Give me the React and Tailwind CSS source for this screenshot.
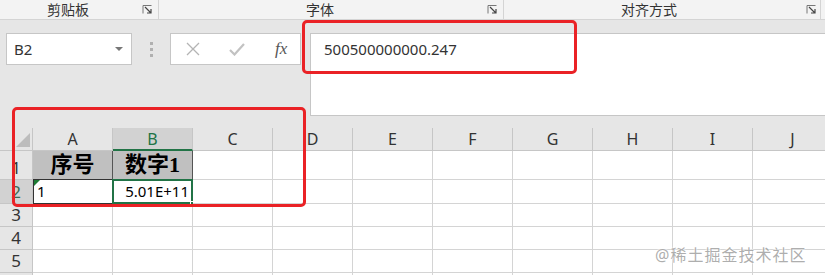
import React from 'react';

const cols = ['A', 'B', 'C', 'D', 'E', 'F', 'G', 'H', 'I', 'J'];

const Launcher = () => (
  <svg width="11" height="11" viewBox="0 0 11 11" className="shrink-0">
    <path d="M1 9.5V1.5H9.5" fill="none" stroke="#777" strokeWidth="1" />
    <path d="M3 3L9 9M9 5V9H5" fill="none" stroke="#444" strokeWidth="1.2" />
  </svg>
);

const RibbonGroup = ({ label, width, labelPad, launcherPad }) => (
  <div className={`flex h-full items-center border-r border-[#d4d4d4] ${width}`}>
    <span className={`text-[14px] leading-none text-[#333] ${labelPad}`}>{label}</span>
    <span className={`ml-auto ${launcherPad}`}>
      <Launcher />
    </span>
  </div>
);

const Cell = ({ children, className = 'bg-white' }) => (
  <div className={`relative h-full w-[80px] shrink-0 border-r border-b border-[#d4d4d4] ${className}`}>
    {children}
  </div>
);

const RowHead = ({ n, active, h }) => (
  <div
    className={`flex w-[33px] shrink-0 items-end justify-center border-r border-b border-[#c6c6c6] text-[17px] leading-none ${
      active ? 'bg-[#d2d2d2] text-[#3c6a52]' : 'bg-[#e6e6e6] text-[#333]'
    } ${h}`}
  >
    <span className="mb-[3px]">{n}</span>
  </div>
);

export default function App() {
  return (
    <div className="relative h-[275px] w-[825px] overflow-hidden bg-[#e6e6e6] font-['Noto_Sans','Noto_Sans_CJK_SC',sans-serif]">
      {/* ribbon group labels */}
      <div className="flex h-[20px] border-b border-[#d4d4d4] bg-[#f3f3f3]">
        <RibbonGroup label="剪贴板" width="w-[159px]" labelPad="pl-[47px]" launcherPad="pr-[5px]" />
        <RibbonGroup label="字体" width="w-[345px]" labelPad="pl-[147px]" launcherPad="pr-[5px]" />
        <RibbonGroup label="对齐方式" width="w-[317px]" labelPad="pl-[117px]" launcherPad="pr-[3px]" />
      </div>

      {/* formula bar */}
      <div className="flex h-[108px] items-start pt-[13px]">
        <div className="ml-[6px] flex h-[32px] w-[126px] items-center border border-[#c6c6c6] bg-white pl-[7px] pr-[8px]">
          <span className="text-[15px] text-[#333]">B2</span>
          <svg width="8" height="4" viewBox="0 0 8 4" className="ml-auto">
            <path d="M0 0H8L4 4Z" fill="#777" />
          </svg>
        </div>
        <div className="flex h-[32px] w-[38px] flex-col items-center justify-center gap-[3px]">
          <span className="h-[3px] w-[3px] bg-[#b0b0b0]" />
          <span className="h-[3px] w-[3px] bg-[#b0b0b0]" />
          <span className="h-[3px] w-[3px] bg-[#b0b0b0]" />
        </div>
        <div className="flex h-[32px] w-[131px] items-center border border-[#c6c6c6] bg-white">
          <svg width="14" height="14" viewBox="0 0 14 14" className="ml-[15px]">
            <path d="M1 1L13 13M13 1L1 13" stroke="#b4b4b4" strokeWidth="1.3" />
          </svg>
          <svg width="16" height="13" viewBox="0 0 16 13" className="ml-[29px]">
            <path d="M1 7L5.5 11.5L15 1" fill="none" stroke="#c2c2c2" strokeWidth="2.2" />
          </svg>
          <span className="ml-[30px] font-['Liberation_Serif',serif] text-[17px] italic text-[#555]">fx</span>
        </div>
        <div className="ml-[9px] flex h-[83px] flex-1 items-start border-y border-l border-[#c6c6c6] bg-white pl-[13px] pt-[4px]">
          <span className="text-[15px] text-[#333]">500500000000.247</span>
        </div>
      </div>

      {/* sheet grid */}
      <div className="flex flex-col">
        <div className="flex h-[23px]">
          <div className="relative w-[33px] shrink-0 border-r border-b border-[#c6c6c6]">
            <svg width="14" height="14" viewBox="0 0 14 14" className="absolute right-[2px] bottom-[3px]">
              <path d="M14 0V14H0Z" fill="#bdbdbd" />
            </svg>
          </div>
          {cols.map((c) => (
            <div
              key={c}
              className={`flex w-[80px] shrink-0 items-center justify-center border-r text-[16px] leading-none ${
                c === 'B'
                  ? 'border-b-2 border-r-[#c6c6c6] border-b-[#217346] bg-[#d2d2d2] text-[#217346]'
                  : 'border-b border-[#c6c6c6] text-[#333]'
              }`}
            >
              {c}
            </div>
          ))}
        </div>

        <div className="flex h-[29px]">
          <RowHead n="1" h="h-[29px]" />
          <Cell className="flex items-center justify-center border-r-[#555] border-b-[#333] bg-[#c0c0c0]">
            <span className="font-['Liberation_Serif','Noto_Sans_CJK_SC',serif] text-[22px] font-bold leading-none text-black">序号</span>
          </Cell>
          <Cell className="flex items-center justify-center border-b-[#217346] border-r-[#555] bg-[#c0c0c0]">
            <span className="font-['Liberation_Serif','Noto_Sans_CJK_SC',serif] text-[22px] font-bold leading-none text-black">数字1</span>
          </Cell>
          {cols.slice(2).map((c) => (
            <Cell key={c} />
          ))}
        </div>

        <div className="flex h-[24px]">
          <RowHead n="2" active h="h-[24px]" />
          <Cell className="flex items-center border-l border-l-[#333] border-r-[#333] border-b-[#333] bg-white pl-[3px]">
            <span className="absolute left-0 top-0 h-0 w-0 border-t-[6px] border-r-[6px] border-t-[#1e7b34] border-r-transparent" />
            <span className="text-[15px] leading-none text-black">1</span>
          </Cell>
          <Cell className="flex items-center justify-end bg-white pr-[3px]">
            <span className="pointer-events-none absolute -left-[1px] -top-[1px] bottom-[-1px] right-[-1px] border-2 border-[#217346]" />
            <span className="absolute -bottom-[3px] -right-[3px] h-[5px] w-[5px] border border-white bg-[#217346]" />
            <span className="relative text-[15px] leading-none text-black">5.01E+11</span>
          </Cell>
          {cols.slice(2).map((c) => (
            <Cell key={c} />
          ))}
        </div>

        {['3', '4', '5', ''].map((n, i) => (
          <div key={i} className="flex h-[23px]">
            <RowHead n={n} h="h-[23px]" />
            {cols.map((c) => (
              <Cell key={c} />
            ))}
          </div>
        ))}
      </div>

      {/* red annotation frames */}
      <div className="absolute left-[302px] top-[20px] h-[54px] w-[275px] rounded-[5px] border-[3px] border-[#ea2226]" />
      <div className="absolute left-[12px] top-[107px] h-[100px] w-[294px] rounded-[5px] border-[3px] border-[#ea2226]" />

      {/* watermark */}
      <div className="absolute left-[655px] top-[247px] text-[16px] leading-none tracking-[1px] text-[#8a8a8a]/70 [text-shadow:0_0_2px_#fff,0_0_2px_#fff]">
        @稀土掘金技术社区
      </div>
    </div>
  );
}
